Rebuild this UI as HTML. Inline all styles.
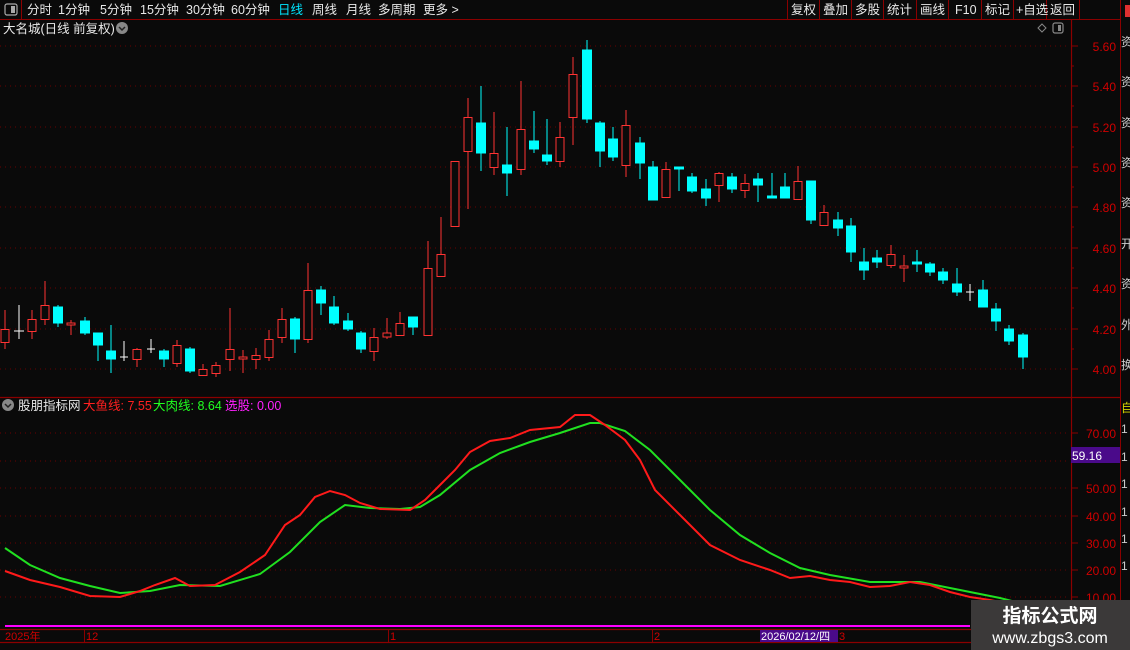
<!DOCTYPE html>
<html><head><meta charset="utf-8"><style>
html,body{margin:0;padding:0;background:#0a0a0a;width:1130px;height:650px;overflow:hidden;font-family:"Liberation Sans","Noto Sans CJK SC",sans-serif}
svg{position:absolute;left:0;top:0}
</style></head><body>
<svg width="1130" height="650" viewBox="0 0 1130 650" font-family="Liberation Sans, Noto Sans CJK SC, sans-serif">
<rect width="1130" height="650" fill="#0a0a0a"/>
<line x1="0" y1="19.5" x2="1120" y2="19.5" stroke="#8b0000"/>
<line x1="21.5" y1="0" x2="21.5" y2="19" stroke="#8b0000"/>
<rect x="5" y="4" width="12" height="11" rx="2" fill="none" stroke="#aaa" stroke-width="1.2"/>
<rect x="11" y="6" width="4" height="7" fill="#aaa"/>
<g font-size="12.5" fill="#e8e8e8">
<text x="27" y="14">分时</text><text x="58" y="14">1分钟</text><text x="100" y="14">5分钟</text><text x="140" y="14">15分钟</text><text x="186" y="14">30分钟</text><text x="231" y="14">60分钟</text>
<text x="278" y="14" fill="#00e5ff">日线</text><text x="312" y="14">周线</text><text x="346" y="14">月线</text><text x="378" y="14">多周期</text><text x="423" y="14">更多 &gt;</text>
</g>
<g stroke="#8b0000"><line x1="787.5" y1="0" x2="787.5" y2="19"/><line x1="819.5" y1="0" x2="819.5" y2="19"/><line x1="851.5" y1="0" x2="851.5" y2="19"/><line x1="883.5" y1="0" x2="883.5" y2="19"/><line x1="916.5" y1="0" x2="916.5" y2="19"/><line x1="948.5" y1="0" x2="948.5" y2="19"/><line x1="981.5" y1="0" x2="981.5" y2="19"/><line x1="1013.5" y1="0" x2="1013.5" y2="19"/><line x1="1046.5" y1="0" x2="1046.5" y2="19"/><line x1="1079.5" y1="0" x2="1079.5" y2="19"/></g>
<g font-size="12.5" fill="#e8e8e8">
<text x="791" y="14">复权</text><text x="823" y="14">叠加</text><text x="855" y="14">多股</text><text x="887" y="14">统计</text><text x="920" y="14">画线</text><text x="955" y="14">F10</text><text x="985" y="14">标记</text><text x="1016" y="14">+自选</text><text x="1050" y="14">返回</text>
</g>
<rect x="1125" y="5" width="5" height="12" fill="#e03030"/>
<text x="3" y="33" font-size="12.5" fill="#e8e8e8">大名城(日线 前复权)</text>
<circle cx="122" cy="28" r="6" fill="#888"/><path d="M119 27 L122 30 L125 27" stroke="#222" stroke-width="1.5" fill="none"/>
<path d="M1042 24 L1046 28 L1042 32 L1038 28 Z" fill="none" stroke="#888"/>
<rect x="1053" y="23" width="10" height="10" rx="2" fill="none" stroke="#888" stroke-width="1.2"/><rect x="1058" y="25" width="3" height="6" fill="#888"/>
<line x1="1071.5" y1="20" x2="1071.5" y2="642" stroke="#8b0000" stroke-width="1.2"/>
<line x1="1120.5" y1="0" x2="1120.5" y2="650" stroke="#8b0000"/>
<line x1="0" y1="397.5" x2="1120" y2="397.5" stroke="#8b0000" stroke-width="1.2"/>
<g stroke="#6a0000" stroke-dasharray="1,4">
<line x1="0" y1="46" x2="1070" y2="46"/><line x1="0" y1="86" x2="1070" y2="86"/><line x1="0" y1="127" x2="1070" y2="127"/><line x1="0" y1="167" x2="1070" y2="167"/><line x1="0" y1="207" x2="1070" y2="207"/><line x1="0" y1="248" x2="1070" y2="248"/><line x1="0" y1="288" x2="1070" y2="288"/><line x1="0" y1="329" x2="1070" y2="329"/><line x1="0" y1="369" x2="1070" y2="369"/>
<line x1="0" y1="433" x2="1070" y2="433"/><line x1="0" y1="461" x2="1070" y2="461"/><line x1="0" y1="488" x2="1070" y2="488"/><line x1="0" y1="516" x2="1070" y2="516"/><line x1="0" y1="543" x2="1070" y2="543"/><line x1="0" y1="570" x2="1070" y2="570"/><line x1="0" y1="597" x2="1070" y2="597"/>
</g>
<g stroke="#8b0000">
<line x1="1071" y1="46" x2="1078" y2="46"/><line x1="1071" y1="86" x2="1078" y2="86"/><line x1="1071" y1="127" x2="1078" y2="127"/><line x1="1071" y1="167" x2="1078" y2="167"/><line x1="1071" y1="207" x2="1078" y2="207"/><line x1="1071" y1="248" x2="1078" y2="248"/><line x1="1071" y1="288" x2="1078" y2="288"/><line x1="1071" y1="329" x2="1078" y2="329"/><line x1="1071" y1="369" x2="1078" y2="369"/>
<line x1="1071" y1="66" x2="1074" y2="66"/><line x1="1071" y1="106" x2="1074" y2="106"/><line x1="1071" y1="147" x2="1074" y2="147"/><line x1="1071" y1="187" x2="1074" y2="187"/><line x1="1071" y1="227" x2="1074" y2="227"/><line x1="1071" y1="268" x2="1074" y2="268"/><line x1="1071" y1="308" x2="1074" y2="308"/><line x1="1071" y1="349" x2="1074" y2="349"/>
<line x1="1071" y1="433" x2="1078" y2="433"/><line x1="1071" y1="461" x2="1078" y2="461"/><line x1="1071" y1="488" x2="1078" y2="488"/><line x1="1071" y1="516" x2="1078" y2="516"/><line x1="1071" y1="543" x2="1078" y2="543"/><line x1="1071" y1="570" x2="1078" y2="570"/><line x1="1071" y1="597" x2="1078" y2="597"/>
</g>
<g font-size="12" fill="#d00000" text-anchor="end">
<text x="1116" y="51">5.60</text><text x="1116" y="91">5.40</text><text x="1116" y="132">5.20</text><text x="1116" y="172">5.00</text><text x="1116" y="212">4.80</text><text x="1116" y="253">4.60</text><text x="1116" y="293">4.40</text><text x="1116" y="334">4.20</text><text x="1116" y="374">4.00</text>
<text x="1116" y="438">70.00</text><text x="1116" y="493">50.00</text><text x="1116" y="521">40.00</text><text x="1116" y="548">30.00</text><text x="1116" y="575">20.00</text><text x="1116" y="602">10.00</text>
</g>
<rect x="1071" y="447" width="49" height="16" fill="#4a0a8a"/>
<text x="1072" y="460" font-size="12" fill="#fff">59.16</text>
<g fill="#ccc" font-size="12"><text x="1121" y="46">资</text><text x="1121" y="86">资</text><text x="1121" y="127">资</text><text x="1121" y="167">资</text><text x="1121" y="207">资</text><text x="1121" y="248">开</text><text x="1121" y="288">资</text><text x="1121" y="329">外</text><text x="1121" y="369">换</text>
<text x="1121" y="433">1</text><text x="1121" y="461">1</text><text x="1121" y="488">1</text><text x="1121" y="516">1</text><text x="1121" y="543">1</text><text x="1121" y="570">1</text></g>
<text x="1121" y="412" fill="#d4d400" font-size="12">自</text>
<g stroke-width="1">
<g stroke="#ff3333" fill="#0a0a0a">
<line x1="5" y1="310" x2="5" y2="349"/><rect x="1" y="329.5" width="8" height="13"/>
<line x1="32" y1="310" x2="32" y2="339"/><rect x="28" y="319.5" width="8" height="12"/>
<line x1="45" y1="281" x2="45" y2="325"/><rect x="41" y="305.5" width="8" height="14"/>
<line x1="71" y1="320" x2="71" y2="335"/><rect x="67" y="323" width="8" height="2"/>
<line x1="137" y1="348" x2="137" y2="367"/><rect x="133" y="349.5" width="8" height="10"/>
<line x1="177" y1="340" x2="177" y2="367"/><rect x="173" y="345.5" width="8" height="18"/>
<line x1="203" y1="364" x2="203" y2="375"/><rect x="199" y="369.5" width="8" height="6"/>
<line x1="216" y1="362" x2="216" y2="377"/><rect x="212" y="365.5" width="8" height="8"/>
<line x1="230" y1="308" x2="230" y2="371"/><rect x="226" y="349.5" width="8" height="10"/>
<line x1="243" y1="350" x2="243" y2="373"/><rect x="239" y="357" width="8" height="2"/>
<line x1="256" y1="348" x2="256" y2="369"/><rect x="252" y="355.5" width="8" height="4"/>
<line x1="269" y1="330" x2="269" y2="361"/><rect x="265" y="339.5" width="8" height="18"/>
<line x1="282" y1="308" x2="282" y2="343"/><rect x="278" y="319.5" width="8" height="18"/>
<line x1="308" y1="263" x2="308" y2="343"/><rect x="304" y="290.5" width="8" height="49"/>
<line x1="374" y1="328" x2="374" y2="361"/><rect x="370" y="337.5" width="8" height="14"/>
<line x1="387" y1="318" x2="387" y2="339"/><rect x="383" y="333" width="8" height="4"/>
<line x1="400" y1="312" x2="400" y2="336"/><rect x="396" y="323.5" width="8" height="12"/>
<line x1="428" y1="241" x2="428" y2="336"/><rect x="424" y="268.5" width="8" height="67"/>
<line x1="441" y1="217" x2="441" y2="277"/><rect x="437" y="254.5" width="8" height="22"/>
<line x1="455" y1="161" x2="455" y2="227"/><rect x="451" y="161.5" width="8" height="65"/>
<line x1="468" y1="98" x2="468" y2="209"/><rect x="464" y="117.5" width="8" height="34"/>
<line x1="494" y1="112" x2="494" y2="175"/><rect x="490" y="153.5" width="8" height="14"/>
<line x1="521" y1="81" x2="521" y2="175"/><rect x="517" y="129.5" width="8" height="40"/>
<line x1="560" y1="122" x2="560" y2="167"/><rect x="556" y="137.5" width="8" height="24"/>
<line x1="573" y1="57" x2="573" y2="145"/><rect x="569" y="74.5" width="8" height="43"/>
<line x1="626" y1="110" x2="626" y2="177"/><rect x="622" y="125.5" width="8" height="40"/>
<line x1="666" y1="162" x2="666" y2="197"/><rect x="662" y="169.5" width="8" height="28"/>
<line x1="719" y1="172" x2="719" y2="202"/><rect x="715" y="173.5" width="8" height="12"/>
<line x1="745" y1="174" x2="745" y2="198"/><rect x="741" y="183.5" width="8" height="7"/>
<line x1="798" y1="166" x2="798" y2="199"/><rect x="794" y="181.5" width="8" height="18"/>
<line x1="824" y1="205" x2="824" y2="226"/><rect x="820" y="212.5" width="8" height="13"/>
<line x1="891" y1="245" x2="891" y2="268"/><rect x="887" y="254.5" width="8" height="11"/>
<line x1="904" y1="255" x2="904" y2="282"/><rect x="900" y="266" width="8" height="2"/>
</g>
<g stroke="#00ffff" fill="#00ffff">
<line x1="58" y1="305" x2="58" y2="327"/><rect x="53.5" y="307" width="9" height="16"/>
<line x1="85" y1="317" x2="85" y2="335"/><rect x="80.5" y="321" width="9" height="12"/>
<line x1="98" y1="333" x2="98" y2="361"/><rect x="93.5" y="333" width="9" height="12"/>
<line x1="111" y1="325" x2="111" y2="373"/><rect x="106.5" y="351" width="9" height="8"/>
<line x1="164" y1="349" x2="164" y2="367"/><rect x="159.5" y="351" width="9" height="8"/>
<line x1="190" y1="347" x2="190" y2="373"/><rect x="185.5" y="349" width="9" height="22"/>
<line x1="295" y1="317" x2="295" y2="353"/><rect x="290.5" y="319" width="9" height="20"/>
<line x1="321" y1="286" x2="321" y2="315"/><rect x="316.5" y="290" width="9" height="13"/>
<line x1="334" y1="296" x2="334" y2="325"/><rect x="329.5" y="307" width="9" height="16"/>
<line x1="348" y1="313" x2="348" y2="331"/><rect x="343.5" y="321" width="9" height="8"/>
<line x1="361" y1="331" x2="361" y2="353"/><rect x="356.5" y="333" width="9" height="16"/>
<line x1="413" y1="317" x2="413" y2="335"/><rect x="408.5" y="317" width="9" height="10"/>
<line x1="481" y1="86" x2="481" y2="171"/><rect x="476.5" y="123" width="9" height="30"/>
<line x1="507" y1="127" x2="507" y2="196"/><rect x="502.5" y="165" width="9" height="8"/>
<line x1="534" y1="111" x2="534" y2="153"/><rect x="529.5" y="141" width="9" height="8"/>
<line x1="547" y1="119" x2="547" y2="165"/><rect x="542.5" y="155" width="9" height="6"/>
<line x1="587" y1="40" x2="587" y2="123"/><rect x="582.5" y="50" width="9" height="69"/>
<line x1="600" y1="121" x2="600" y2="167"/><rect x="595.5" y="123" width="9" height="28"/>
<line x1="613" y1="127" x2="613" y2="161"/><rect x="608.5" y="139" width="9" height="18"/>
<line x1="640" y1="137" x2="640" y2="179"/><rect x="635.5" y="143" width="9" height="20"/>
<line x1="653" y1="161" x2="653" y2="200"/><rect x="648.5" y="167" width="9" height="33"/>
<line x1="679" y1="168" x2="679" y2="191"/><rect x="674.5" y="167" width="9" height="2"/>
<line x1="692" y1="173" x2="692" y2="193"/><rect x="687.5" y="177" width="9" height="14"/>
<line x1="706" y1="179" x2="706" y2="206"/><rect x="701.5" y="189" width="9" height="9"/>
<line x1="732" y1="173" x2="732" y2="193"/><rect x="727.5" y="177" width="9" height="12"/>
<line x1="758" y1="173" x2="758" y2="202"/><rect x="753.5" y="179" width="9" height="6"/>
<line x1="772" y1="173" x2="772" y2="198"/><rect x="767.5" y="196" width="9" height="2"/>
<line x1="785" y1="173" x2="785" y2="198"/><rect x="780.5" y="187" width="9" height="11"/>
<line x1="811" y1="181" x2="811" y2="224"/><rect x="806.5" y="181" width="9" height="39"/>
<line x1="838" y1="212" x2="838" y2="236"/><rect x="833.5" y="220" width="9" height="8"/>
<line x1="851" y1="218" x2="851" y2="262"/><rect x="846.5" y="226" width="9" height="26"/>
<line x1="864" y1="248" x2="864" y2="280"/><rect x="859.5" y="262" width="9" height="8"/>
<line x1="877" y1="250" x2="877" y2="268"/><rect x="872.5" y="258" width="9" height="4"/>
<line x1="917" y1="250" x2="917" y2="272"/><rect x="912.5" y="262" width="9" height="2"/>
<line x1="930" y1="262" x2="930" y2="276"/><rect x="925.5" y="264" width="9" height="8"/>
<line x1="943" y1="268" x2="943" y2="284"/><rect x="938.5" y="272" width="9" height="8"/>
<line x1="957" y1="268" x2="957" y2="296"/><rect x="952.5" y="284" width="9" height="8"/>
<line x1="983" y1="280" x2="983" y2="307"/><rect x="978.5" y="290" width="9" height="17"/>
<line x1="996" y1="303" x2="996" y2="331"/><rect x="991.5" y="309" width="9" height="12"/>
<line x1="1009" y1="325" x2="1009" y2="345"/><rect x="1004.5" y="329" width="9" height="12"/>
<line x1="1023" y1="333" x2="1023" y2="369"/><rect x="1018.5" y="335" width="9" height="22"/>
</g>
<g stroke="#ffffff">
<line x1="19" y1="305" x2="19" y2="339"/><line x1="14" y1="331" x2="24" y2="331"/>
<line x1="124" y1="341" x2="124" y2="361"/><line x1="120" y1="357" x2="128" y2="357"/>
<line x1="151" y1="339" x2="151" y2="353"/><line x1="147" y1="349" x2="155" y2="349"/>
<line x1="970" y1="284" x2="970" y2="301"/><line x1="966" y1="292" x2="974" y2="292"/>
</g>
</g>
<circle cx="8" cy="405" r="6" fill="#888"/><path d="M5 404 L8 407 L11 404" stroke="#222" stroke-width="1.5" fill="none"/>
<g font-size="12.5"><text x="18" y="410" fill="#e8e8e8">股朋指标网</text><text x="83" y="410" fill="#ff2020">大鱼线: 7.55</text><text x="153" y="410" fill="#20ff20">大肉线: 8.64</text><text x="225" y="410" fill="#ff20ff">选股: 0.00</text></g>
<polyline fill="none" stroke="#20e020" stroke-width="2" points="5,548 30,565 60,578 90,586 120,593 150,591 180,585 220,586 260,574 290,552 320,522 345,505 370,508 400,509 420,507 440,495 470,470 500,453 530,442 560,433 590,423 600,423 625,431 650,450 680,480 710,510 740,535 770,553 800,568 830,575 870,582 920,582 960,590 1000,598 1020,603"/>
<polyline fill="none" stroke="#ff1a1a" stroke-width="2" points="5,571 30,580 60,587 90,596 120,597 140,591 155,585 175,578 190,586 215,585 240,572 265,555 285,525 300,515 315,497 330,491 345,495 360,503 380,509 410,510 425,500 440,485 455,470 470,452 490,441 510,438 530,430 560,427 575,415 590,415 605,425 625,440 640,460 655,490 680,515 710,545 740,560 770,570 790,578 810,576 830,580 850,582 870,587 890,586 910,582 930,585 950,592 970,597 990,600 1010,604"/>
<line x1="5" y1="626" x2="970" y2="626" stroke="#ff00ff" stroke-width="2"/>
<line x1="0" y1="629.5" x2="1071" y2="629.5" stroke="#8b0000" stroke-width="1.2"/>
<line x1="0" y1="642.5" x2="1071" y2="642.5" stroke="#8b0000" stroke-width="1.2"/>
<g stroke="#8b0000"><line x1="84.5" y1="630" x2="84.5" y2="642"/><line x1="388.5" y1="630" x2="388.5" y2="642"/><line x1="652.5" y1="630" x2="652.5" y2="642"/></g>
<g font-size="11" fill="#d00000"><text x="5" y="640">2025年</text><text x="86" y="640">12</text><text x="390" y="640">1</text><text x="654" y="640">2</text><text x="839" y="640">3</text></g>
<rect x="760" y="630" width="78" height="12" fill="#4a0a8a"/>
<text x="761" y="640" font-size="11" fill="#fff">2026/02/12/四</text>
<rect x="971" y="600" width="159" height="50" fill="#3b3939"/>
<text x="1050" y="622" font-size="19" font-weight="bold" fill="#fff" text-anchor="middle">指标公式网</text>
<text x="1050" y="643" font-size="16" fill="#fff" text-anchor="middle">www.zbgs3.com</text>
</svg>
</body></html>
